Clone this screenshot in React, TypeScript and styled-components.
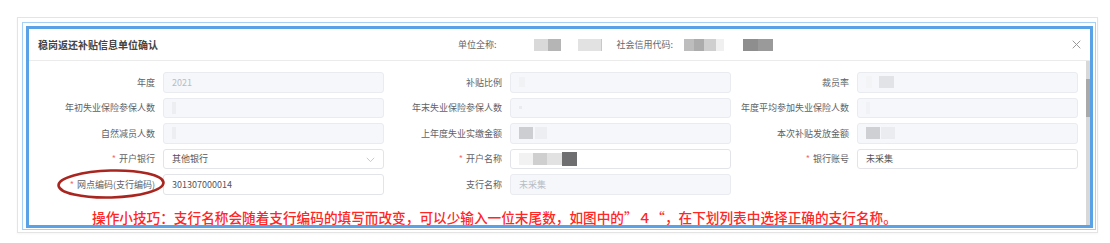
import React from 'react';
import styled, { createGlobalStyle } from 'styled-components';

const GlobalStyle = createGlobalStyle`
    html, body {
        margin: 0;
        padding: 0;
        background: #ffffff;
    }
    body {
        font-family: 'Noto Sans CJK SC', 'Noto Sans', sans-serif;
    }
    * {
        box-sizing: border-box;
    }
`;

const Page = styled.div`
    width: 1110px;
    height: 243px;
    padding: 17px 0 0 17px;
`;

const OuterFrame = styled.div`
    width: 1081px;
    height: 216px;
    border: 1px solid #e4e4e4;
    padding: 4px 1px 2px 4px;
    box-shadow: 0 1px 2px rgba(0, 0, 0, 0.04);
`;

const ThinFrame = styled.div`
    height: 100%;
    border: 1px solid #a6d0f4;
    padding: 3px 2px 1px 3px;
`;

const Dialog = styled.div`
    height: 100%;
    border: 3px solid #5aa2e6;
    background: #ffffff;
    display: flex;
    flex-direction: column;
    overflow: hidden;
`;

const Header = styled.div`
    height: 32px;
    flex: none;
    display: flex;
    align-items: center;
    padding: 0 0 0 9px;
    border-bottom: 1px solid #ebebeb;
    position: relative;
`;

const Title = styled.div`
    font-size: 10px;
    font-weight: 700;
    color: #444444;
    width: 420px;
`;

const HeaderLabel = styled.span<{ $gap: number }>`
    font-size: 9px;
    color: #666666;
    margin-right: ${({ $gap }) => $gap}px;
`;

const Redact = styled.span<{ $shade: string; $w: number; $h?: number; $mr?: number }>`
    display: inline-block;
    width: ${({ $w }) => $w}px;
    height: ${({ $h }) => $h ?? 12}px;
    background: ${({ $shade }) => $shade};
    margin-right: ${({ $mr }) => $mr ?? 0}px;
    filter: blur(0.6px);
    vertical-align: middle;
`;

const RedactGroup = styled.span<{ $mr?: number }>`
    display: inline-flex;
    align-items: center;
    margin-right: ${({ $mr }) => $mr ?? 0}px;
`;

const Close = styled.div`
    position: absolute;
    right: 8px;
    top: 9px;
    width: 12px;
    height: 12px;
    display: flex;
    align-items: center;
    justify-content: center;
`;

const Body = styled.div`
    flex: 1;
    display: flex;
    min-height: 0;
`;

const Content = styled.div`
    flex: 1;
    padding: 11px 0 0 8px;
    position: relative;
`;

const Scrollbar = styled.div`
    width: 4px;
    background: #d8d8d8;
    position: relative;
    flex: none;
`;

const Thumb = styled.div`
    position: absolute;
    left: 0;
    right: 0;
    top: 18px;
    height: 38px;
    background: #a9a9a9;
`;

const Grid = styled.div`
    display: grid;
    grid-template-columns: repeat(3, 347px);
    row-gap: 5px;
`;

const Field = styled.div`
    display: flex;
    align-items: center;
    gap: 8px;
    position: relative;
`;

const Label = styled.div`
    width: 118px;
    flex: none;
    text-align: right;
    font-size: 9px;
    color: #606266;
    white-space: nowrap;
`;

const Star = styled.span`
    color: #f56c6c;
    margin-right: 3px;
`;

const Input = styled.div<{ $disabled?: boolean }>`
    width: 221px;
    height: 20.5px;
    border: 1px solid ${({ $disabled }) => ($disabled ? '#e9ebf0' : '#e2e4e9')};
    background: ${({ $disabled }) => ($disabled ? '#f5f7fa' : '#ffffff')};
    border-radius: 3px;
    padding: 0 8px;
    display: flex;
    align-items: center;
    font-size: 9px;
    color: ${({ $disabled }) => ($disabled ? '#b8bcc4' : '#555555')};
    position: relative;
`;

const Chevron = styled.svg`
    position: absolute;
    right: 8px;
    top: 7px;
`;

const Ellipse = styled.svg`
    position: absolute;
    left: 19px;
    top: -6px;
    pointer-events: none;
`;

const Tip = styled.div`
    margin: 12px 0 0 55px;
    font-size: 13.65px;
    font-weight: 500;
    color: #ff2626;
    white-space: nowrap;
`;

const FieldRow: React.FC<{
    label: string;
    required?: boolean;
    disabled?: boolean;
    children?: React.ReactNode;
    select?: boolean;
    circled?: boolean;
}> = ({ label, required, disabled, children, select, circled }) => (
    <Field>
        <Label>
            {required && <Star>*</Star>}
            {label}
        </Label>
        <Input $disabled={disabled}>
            {children}
            {select && (
                <Chevron width="9" height="6" viewBox="0 0 9 6">
                    <path d="M0.8 0.8 L4.5 4.6 L8.2 0.8" fill="none" stroke="#c0c4cc" strokeWidth="0.9" />
                </Chevron>
            )}
        </Input>
        {circled && (
            <Ellipse width="112" height="32" viewBox="0 0 112 32">
                <ellipse
                    cx="55"
                    cy="16"
                    rx="52.5"
                    ry="13.5"
                    fill="none"
                    stroke="#a8261f"
                    strokeWidth="2.6"
                    transform="rotate(-1.5 55 16)"
                />
            </Ellipse>
        )}
    </Field>
);

export default function App() {
    return (
        <Page>
            <GlobalStyle />
            <OuterFrame>
                <ThinFrame>
                    <Dialog>
                        <Header>
                            <Title>稳岗返还补贴信息单位确认</Title>
                            <HeaderLabel $gap={37}>单位全称:</HeaderLabel>
                            <RedactGroup $mr={17}>
                                <Redact $shade="#d9d9d9" $w={14} />
                                <Redact $shade="#b5b5b5" $w={13} />
                            </RedactGroup>
                            <RedactGroup $mr={15}>
                                <Redact $shade="#e2e2e2" $w={23} />
                                <Redact $shade="#c8c8c8" $w={1} />
                            </RedactGroup>
                            <HeaderLabel $gap={11}>社会信用代码:</HeaderLabel>
                            <RedactGroup $mr={19}>
                                <Redact $shade="#bdbdbd" $w={10} />
                                <Redact $shade="#acacac" $w={10} />
                                <Redact $shade="#cfcfcf" $w={12} />
                                <Redact $shade="#f0f0f0" $w={8} />
                            </RedactGroup>
                            <RedactGroup>
                                <Redact $shade="#8e8e8e" $w={15} />
                                <Redact $shade="#9a9a9a" $w={15} />
                            </RedactGroup>
                            <Close>
                                <svg width="9" height="9" viewBox="0 0 9 9">
                                    <path d="M0.7 0.7 L8.3 8.3 M8.3 0.7 L0.7 8.3" stroke="#9a9a9a" strokeWidth="1" />
                                </svg>
                            </Close>
                        </Header>
                        <Body>
                            <Content>
                                <Grid>
                                    <FieldRow label="年度" disabled>
                                        2021
                                    </FieldRow>
                                    <FieldRow label="补贴比例" disabled>
                                        <Redact $shade="#f1f2f4" $w={6} $h={10} />
                                    </FieldRow>
                                    <FieldRow label="裁员率" disabled>
                                        <Redact $shade="#f3f4f6" $w={6} $h={12} $mr={7} />
                                        <Redact $shade="#e2e3e6" $w={15} $h={12} />
                                    </FieldRow>
                                    <FieldRow label="年初失业保险参保人数" disabled>
                                        <Redact $shade="#eceef1" $w={4} $h={12} />
                                    </FieldRow>
                                    <FieldRow label="年末失业保险参保人数" disabled>
                                        <Redact $shade="#e9ebee" $w={3} $h={3} />
                                    </FieldRow>
                                    <FieldRow label="年度平均参加失业保险人数" disabled>
                                        <Redact $shade="#f0f2f5" $w={4} $h={12} />
                                    </FieldRow>
                                    <FieldRow label="自然减员人数" disabled>
                                        <Redact $shade="#eceef1" $w={4} $h={12} />
                                    </FieldRow>
                                    <FieldRow label="上年度失业实缴金额" disabled>
                                        <Redact $shade="#cdced2" $w={14} $h={12} $mr={2} />
                                        <Redact $shade="#eceef1" $w={12} $h={12} />
                                    </FieldRow>
                                    <FieldRow label="本次补贴发放金额" disabled>
                                        <Redact $shade="#cfd0d4" $w={14} $h={12} $mr={1} />
                                        <Redact $shade="#eaecef" $w={14} $h={12} />
                                    </FieldRow>
                                    <FieldRow label="开户银行" required select>
                                        其他银行
                                    </FieldRow>
                                    <FieldRow label="开户名称" required>
                                        <Redact $shade="#f2f2f2" $w={14} $h={12} />
                                        <Redact $shade="#cfcfcf" $w={14} $h={12} />
                                        <Redact $shade="#e2e2e2" $w={15} $h={12} />
                                        <Redact $shade="#6e6e70" $w={15} $h={14} />
                                    </FieldRow>
                                    <FieldRow label="银行账号" required>
                                        未采集
                                    </FieldRow>
                                    <FieldRow label="网点编码(支行编码)" required circled>
                                        301307000014
                                    </FieldRow>
                                    <FieldRow label="支行名称" disabled>
                                        未采集
                                    </FieldRow>
                                </Grid>
                                <Tip>
                                    操作小技巧：支行名称会随着支行编码的填写而改变，可以少输入一位末尾数，如图中的”４“，在下划列表中选择正确的支行名称。
                                </Tip>
                            </Content>
                            <Scrollbar>
                                <Thumb />
                            </Scrollbar>
                        </Body>
                    </Dialog>
                </ThinFrame>
            </OuterFrame>
        </Page>
    );
}
